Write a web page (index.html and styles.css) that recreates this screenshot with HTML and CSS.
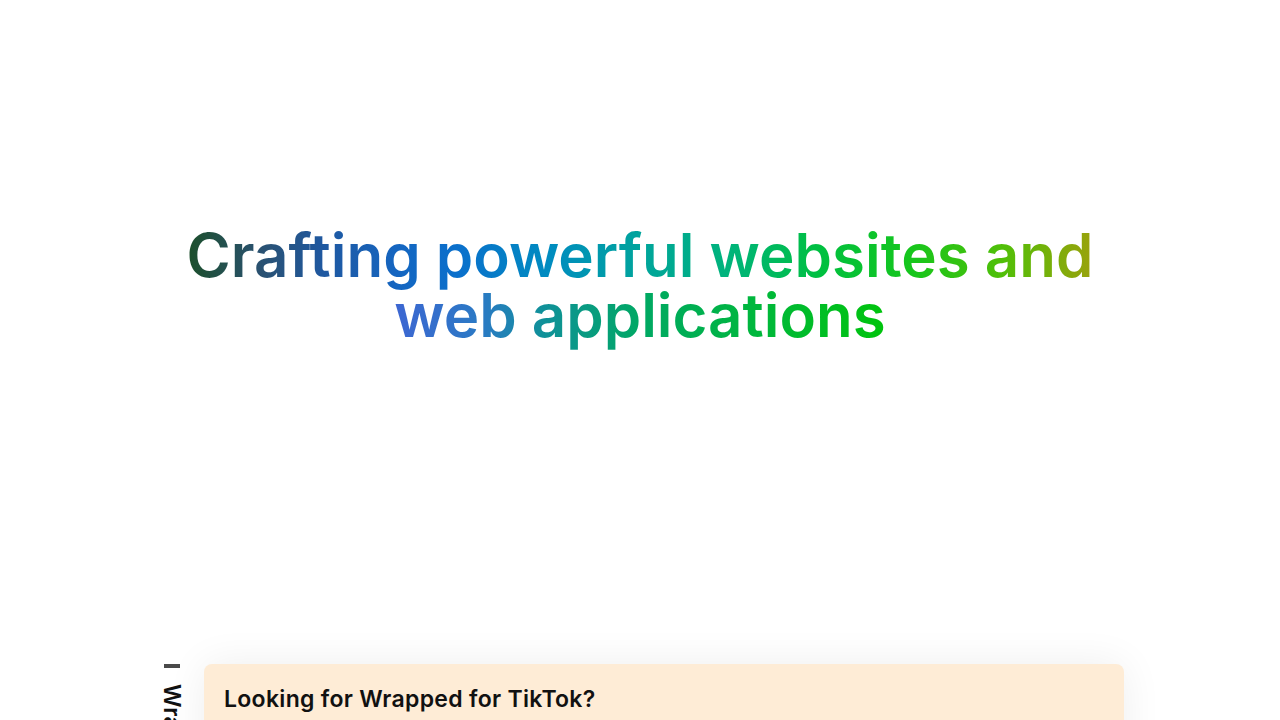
FILE: index.html
```html
<!DOCTYPE html>
<html lang="en">
<head>
<meta charset="utf-8">
<title>Crafting powerful websites</title>
<link rel="stylesheet" href="styles.css">
</head>
<body>
  <section class="hero">
    <h1 class="hero-title">
      <span class="line line-one">Crafting powerful websites and</span>
      <span class="line line-two">web applications</span>
    </h1>
  </section>
  <section class="feature">
    <div class="side-label">
      <span class="side-bar"></span>
      <span class="side-text">Wrapped</span>
    </div>
    <div class="card">
      <h2 class="card-title">Looking for Wrapped for TikTok?</h2>
    </div>
  </section>
</body>
</html>
```
FILE: styles.css
```css
html, body {
  margin: 0;
  padding: 0;
  background: #ffffff;
  font-family: "Inter", "Noto Sans", sans-serif;
  color: #111111;
}
body {
  overflow: hidden;
  height: 720px;
}
.hero {
  height: 570px;
  display: flex;
  align-items: center;
  justify-content: center;
}
.hero-title {
  margin: 0;
  text-align: center;
  font-size: 60px;
  line-height: 60px;
  font-weight: 600;
  letter-spacing: 0;
}
.line {
  display: block;
  width: fit-content;
  margin: 0 auto;
  padding: 8px 0 14px;
  -webkit-background-clip: text;
  background-clip: text;
  color: transparent;
}
.line-one {
  margin-top: -8px;
  margin-bottom: -22px;
  background-image: linear-gradient(90deg,
    #1c4f2a 0%,
    #2a5170 8%,
    #1f58a0 15%,
    #1565c0 23%,
    #0a70cc 30%,
    #008cc0 40%,
    #00a49c 50%,
    #00b47a 60%,
    #00c040 70%,
    #16c61c 80%,
    #50bf08 90%,
    #9aa20c 100%);
}
.line-two {
  margin-bottom: -14px;
  background-image: linear-gradient(90deg,
    #3d66d2 0%,
    #2a7ac4 18%,
    #10909a 30%,
    #00a864 50%,
    #00b83a 75%,
    #00c40c 100%);
}
.feature {
  display: grid;
  grid-template-columns: 24px 920px;
  column-gap: 20px;
  justify-content: center;
  padding-left: 4px;
  padding-top: 94px;
}
.side-label {
  display: flex;
  flex-direction: column;
  align-items: center;
  gap: 16px;
}
.side-bar {
  width: 16px;
  height: 4px;
  background: #4a4a4a;
}
.side-text {
  writing-mode: vertical-rl;
  font-size: 23px;
  font-weight: 600;
  color: #111;
  line-height: 24px;
  letter-spacing: 0.5px;
}
.card {
  background: #feecd6;
  border-radius: 8px;
  padding: 20px 20px 30px;
  box-shadow: 0 0 40px rgba(0, 0, 0, 0.07);
  min-height: 120px;
}
.card-title {
  margin: 0;
  font-size: 23px;
  line-height: 30px;
  font-weight: 600;
  letter-spacing: 0.3px;
  color: #111;
}
```
